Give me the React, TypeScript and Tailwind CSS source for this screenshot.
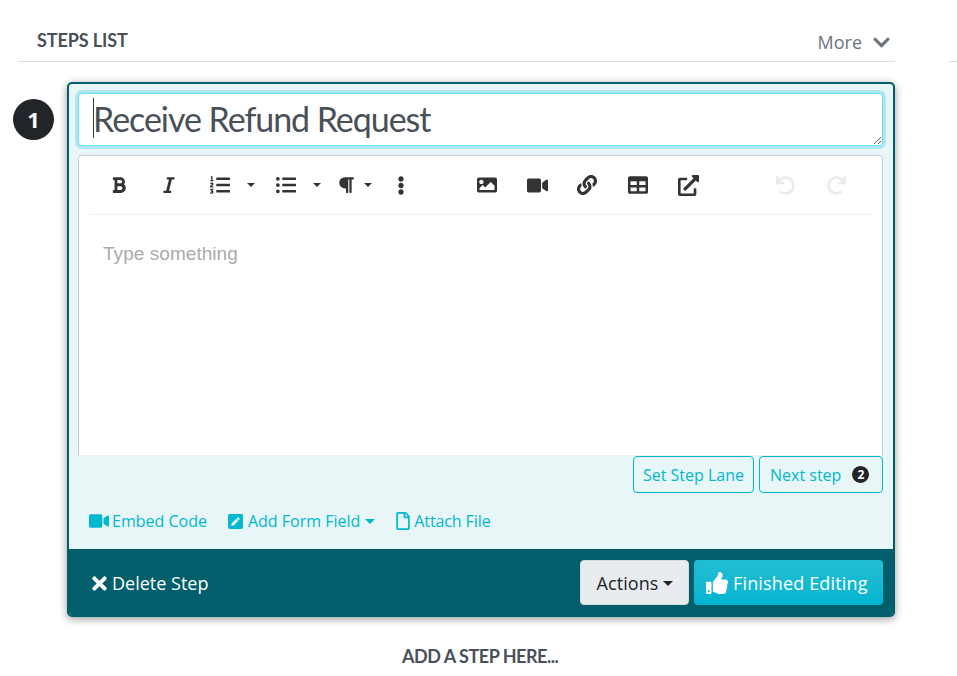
import {
  FaBold,
  FaItalic,
  FaListOl,
  FaListUl,
  FaParagraph,
  FaEllipsisV,
  FaImage,
  FaVideo,
  FaLink,
  FaTable,
  FaExternalLinkAlt,
  FaUndo,
  FaRedo,
  FaChevronDown,
  FaTimes,
  FaThumbsUp,
  FaPenSquare,
  FaRegFile,
} from "react-icons/fa";

function Caret({ className = "" }: { className?: string }) {
  return <span className={`inline-block w-0 h-0 border-x-[4px] border-x-transparent border-t-[4px] ${className}`} />;
}

function Toolbar() {
  return (
    <div className="mx-[10px] h-[59px] border-b border-[#efefef] flex items-center text-[#333]">
      <div className="w-[60px] flex justify-center"><FaBold size={18} /></div>
      <div className="w-[40px] flex justify-center"><FaItalic size={18} /></div>
      <div className="ml-[10px] w-[42px] flex justify-center"><FaListOl size={20} /></div>
      <Caret className="border-t-[#333] ml-[6px]" />
      <div className="ml-[11px] w-[40px] flex justify-center"><FaListUl size={20} /></div>
      <Caret className="border-t-[#333] ml-[7px]" />
      <div className="ml-[17px] w-[16px] flex justify-center"><FaParagraph size={18} /></div>
      <Caret className="border-t-[#333] ml-[10px]" />
      <div className="ml-[21px] w-[16px] flex justify-center"><FaEllipsisV size={19} /></div>
      <div className="ml-[67px] w-[22px] flex justify-center"><FaImage size={20} /></div>
      <div className="ml-[27px] w-[24px] flex justify-center"><FaVideo size={21} /></div>
      <div className="ml-[27px] w-[22px] flex justify-center"><FaLink size={20} /></div>
      <div className="ml-[29px] w-[22px] flex justify-center"><FaTable size={20} /></div>
      <div className="ml-[28px] w-[22px] flex justify-center"><FaExternalLinkAlt size={21} /></div>
      <div className="ml-[75px] w-[22px] flex justify-center text-[#ebebeb]"><FaUndo size={19} /></div>
      <div className="ml-[29px] w-[22px] flex justify-center text-[#ebebeb]"><FaRedo size={19} /></div>
    </div>
  );
}

export default function App() {
  return (
    <div className="min-h-screen bg-white font-['Open_Sans',sans-serif] overflow-hidden">
      <div className="flex h-[62px]">
        <header className="ml-[18px] w-[877px] border-b border-[#dfdfdf] flex justify-between items-start pt-[28px] pl-[19px] pr-[4px]">
          <h2 className="font-['Lato',sans-serif] font-bold text-[18px] leading-[24px] tracking-[-0.1px] text-[#495057]">STEPS LIST</h2>
          <div className="flex items-center gap-[10px] text-[#6c757d] text-[18px] leading-[28px]">
            More <FaChevronDown size={19} />
          </div>
        </header>
        <div className="ml-[54px] flex-1 border-b border-[#dfdfdf]" />
      </div>

      <div className="flex pl-[13px] pt-[20px]">
        <div className="mt-[17px] w-[41px] h-[41px] rounded-full bg-[#212529] text-white flex items-center justify-center font-bold text-[22px]">1</div>
        <div className="ml-[13px] w-[828px] h-[535px] flex flex-col rounded-[5px] border-2 border-[#005f6b] bg-[#e8f6f8] shadow-[0_2px_8px_rgba(0,0,0,0.4)] overflow-hidden">
          <div className="flex-1 pl-[9px] pr-[10px] pt-[9px] flex flex-col">
            <div className="relative">
              <textarea
                readOnly
                defaultValue="Receive Refund Request"
                className="block w-full h-[53px] resize-y rounded-[4px] bg-white border border-[#5ce8fa] shadow-[0_0_0_3px_#b0e6ed] outline-none pl-[14px] pt-[3px] font-['Lato',sans-serif] text-[34px] leading-[44px] tracking-[-1.05px] text-[#495057]"
              />
              <span className="absolute left-[15px] top-[5px] w-px h-[40px] bg-[#343a40]" />
            </div>
            <div className="mt-[9px] h-[301px] bg-white border border-[#cccccc] border-b-[#eeeeee] rounded-t-[4px]">
              <Toolbar />
              <p className="pl-[24px] pt-[27px] font-['Liberation_Sans',sans-serif] text-[19px] leading-[24px] tracking-[0.05px] text-[#aaaaaa]">Type something</p>
            </div>
            <div className="flex justify-end gap-[5px] text-[16px] text-[#00b8d0]">
              <button className="h-[37px] w-[121px] border border-[#00b8d0] rounded-[4px]">Set Step Lane</button>
              <button className="h-[37px] w-[124px] border border-[#00b8d0] rounded-[4px] flex items-center pl-[10px]">
                Next step
                <span className="ml-[10px] w-[19px] h-[19px] rounded-full bg-[#212529] border border-white text-white text-[12px] font-bold flex items-center justify-center">2</span>
              </button>
            </div>
            <div className="mt-[15px] ml-[11px] flex items-center text-[16px] leading-[26px] text-[#00b8d0]">
              <FaVideo size={20} />
              <span className="ml-[3px]">Embed Code</span>
              <FaPenSquare size={17} className="ml-[20px]" />
              <span className="ml-[4px]">Add Form Field</span>
              <Caret className="border-t-[#00b8d0] ml-[5px] border-x-[5px] border-t-[5px]" />
              <FaRegFile size={18} className="ml-[19px]" />
              <span className="ml-[2px] tracking-[-0.1px]">Attach File</span>
            </div>
          </div>
          <div className="h-[66px] pt-[1px] bg-[#005f6b] flex items-center justify-between pl-[20px] pr-[10px] text-white">
            <div className="flex items-center gap-[2px] text-[18px] pt-[1px]">
              <FaTimes size={21} /> Delete Step
            </div>
            <div className="flex gap-[5px] text-[18px]">
              <button className="h-[45px] w-[109px] pt-[1px] rounded-[4px] bg-[#e9ecef] border border-[#d8dce0] text-[#212529] flex items-center justify-center gap-[4px] tracking-[0.1px]">
                Actions <Caret className="border-t-[#212529] border-x-[5px] border-t-[5px]" />
              </button>
              <button className="h-[45px] w-[189px] pl-[12px] pt-[1px] rounded-[4px] bg-gradient-to-b from-[#22bdd3] to-[#00b5cf] flex items-center gap-[5px] tracking-[0.15px]">
                <FaThumbsUp size={22} /> Finished Editing
              </button>
            </div>
          </div>
        </div>
      </div>

      <p className="mt-[27px] ml-[402px] font-['Lato',sans-serif] font-bold text-[18px] leading-[24px] tracking-[-0.48px] text-[#495057]">ADD A STEP HERE...</p>
    </div>
  );
}
